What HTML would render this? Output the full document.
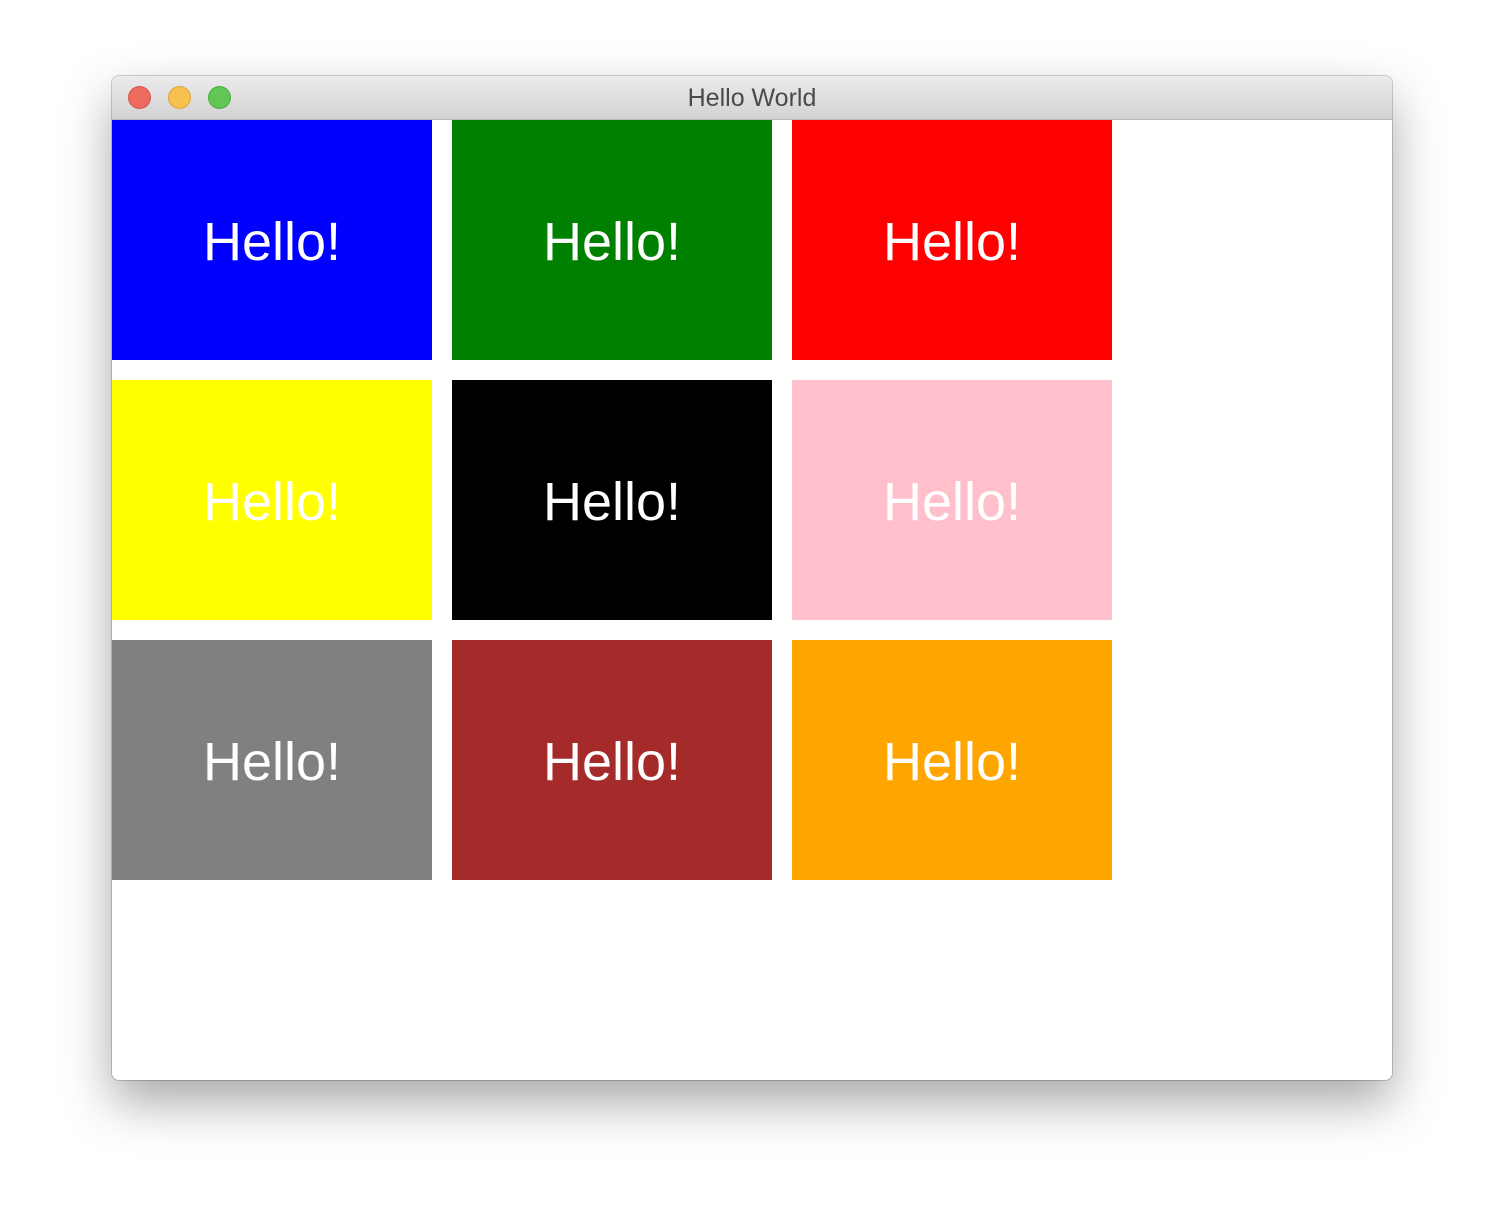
<!DOCTYPE html>
<html><head><style>
body{margin:0;width:1504px;height:1228px;background:#fff;position:relative;overflow:hidden;font-family:"Liberation Sans",sans-serif}
.win{position:absolute;left:112px;top:76px;width:1280px;height:1004px;border-radius:7px;background:#fff;box-shadow:0 22px 50px rgba(0,0,0,.35),0 0 0 1px rgba(0,0,0,.18);overflow:hidden}
.tb{height:43px;background:linear-gradient(#ebebeb,#d3d3d3);border-bottom:1px solid #b8b8b8;position:relative}
.tb .t{position:absolute;left:0;right:0;top:8px;text-align:center;font-size:25px;color:#4a4a4a}
.d{position:absolute;top:10px;width:23px;height:23px;border-radius:50%;box-sizing:border-box}
.tile{position:absolute;width:320px;height:240px;color:#fff;font-size:54px;display:flex;align-items:center;justify-content:center;padding-top:4px;box-sizing:border-box}
</style></head><body>
<div class="win">
<div class="tb">
<div class="d" style="left:16px;background:#ee6a5f;border:1px solid #d5554b"></div>
<div class="d" style="left:56px;background:#f7c150;border:1px solid #dea53b"></div>
<div class="d" style="left:96px;background:#62c655;border:1px solid #4fab43"></div>
<div class="t">Hello World</div>
</div>
<div class="tile" style="left:0;top:44px;background:#00f">Hello!</div>
<div class="tile" style="left:340px;top:44px;background:#008000">Hello!</div>
<div class="tile" style="left:680px;top:44px;background:#f00">Hello!</div>
<div class="tile" style="left:0;top:304px;background:#ff0">Hello!</div>
<div class="tile" style="left:340px;top:304px;background:#000">Hello!</div>
<div class="tile" style="left:680px;top:304px;background:#ffc0cb">Hello!</div>
<div class="tile" style="left:0;top:564px;background:#808080">Hello!</div>
<div class="tile" style="left:340px;top:564px;background:#a52a2a">Hello!</div>
<div class="tile" style="left:680px;top:564px;background:#ffa500">Hello!</div>
</div>
</body></html>
